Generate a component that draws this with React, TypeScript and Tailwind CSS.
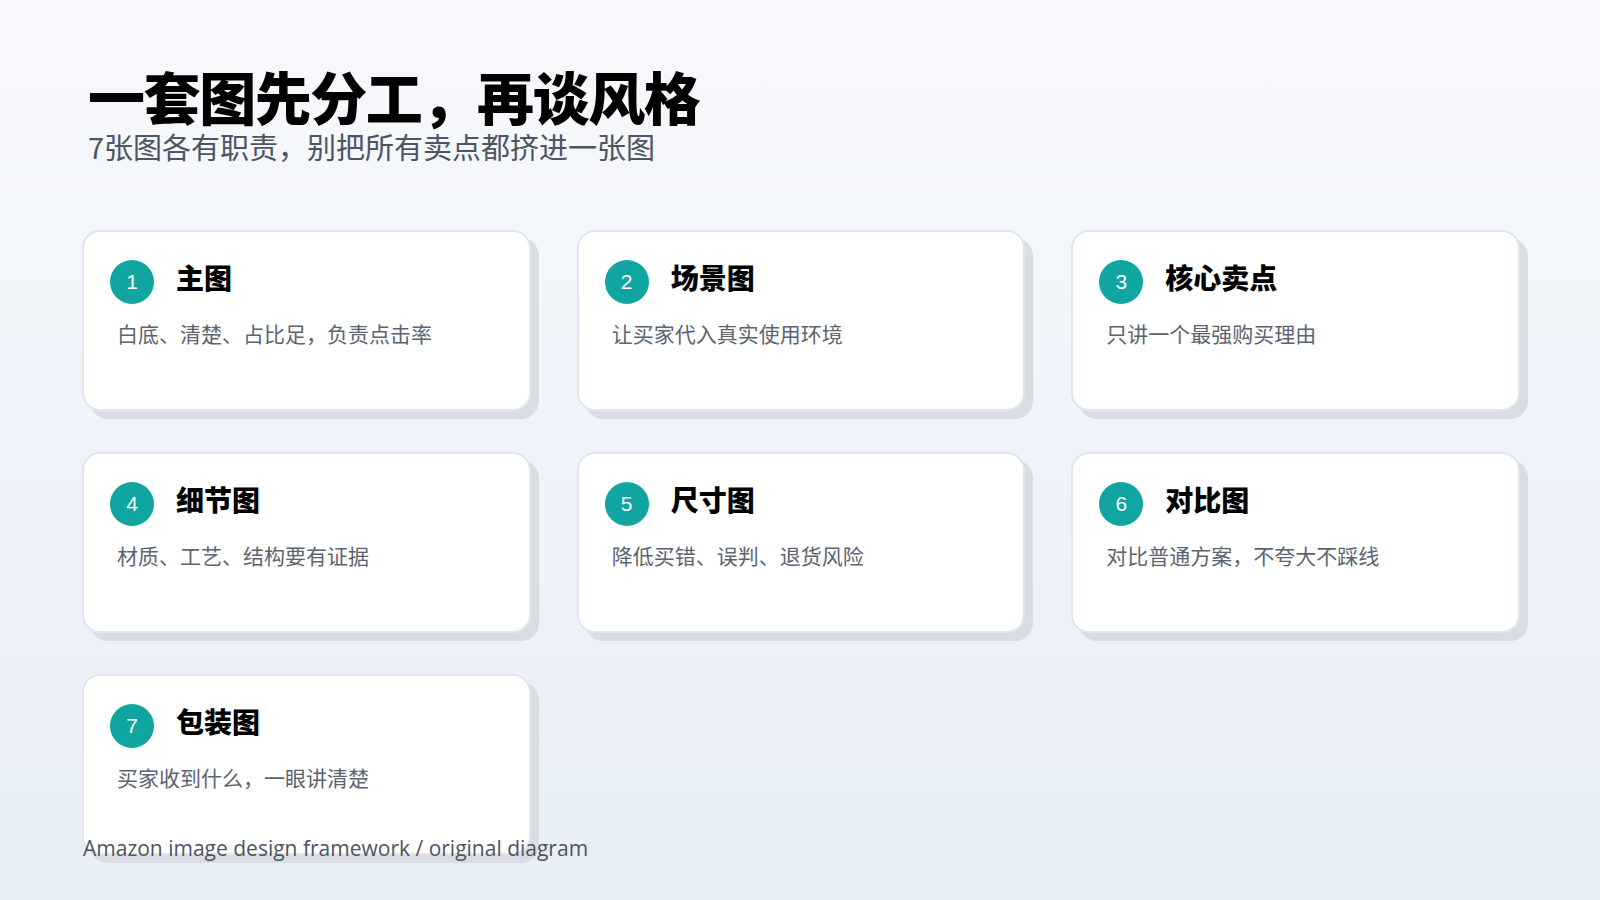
export default function App() {
  const items = [
    ["主图", "白底、清楚、占比足，负责点击率"],
    ["场景图", "让买家代入真实使用环境"],
    ["核心卖点", "只讲一个最强购买理由"],
    ["细节图", "材质、工艺、结构要有证据"],
    ["尺寸图", "降低买错、误判、退货风险"],
    ["对比图", "对比普通方案，不夸大不踩线"],
    ["包装图", "买家收到什么，一眼讲清楚"],
  ];
  const font = { fontFamily: '"Noto Sans CJK SC", "Noto Sans", sans-serif' };
  return (
    <div className="relative w-[1600px] h-[900px] overflow-hidden bg-gradient-to-b from-[#f7f9fc] to-[#e8eef7]" style={font}>
      <div className="pl-[88px] pt-[60px]">
        <h1 className="text-[57px] font-black leading-[70px] text-black tracking-tight">一套图先分工，再谈风格</h1>
        <p className="text-[29px] leading-[36px] text-[#4b5563] -mt-[2px]">7张图各有职责，别把所有卖点都挤进一张图</p>
      </div>
      <div className="grid grid-cols-3 gap-x-[46px] gap-y-[41px] pl-[82px] pr-[80px] mt-[66px]">
        {items.map(([t, d], i) => (
          <div key={i} className="h-[181px] rounded-[18px] bg-white border-2 border-[#e1e6ee] shadow-[8px_8px_0_#d9dde3] pl-[26px] pt-[28px]">
            <div className="flex items-center gap-[22px]">
              <div className="w-[44px] h-[44px] rounded-full bg-[#10a5a0] text-white text-[21px] flex items-center justify-center" style={{ fontFamily: '"Liberation Sans", sans-serif' }}>{i + 1}</div>
              <div className="text-[28px] font-black text-black -mt-[10px]">{t}</div>
            </div>
            <div className="mt-[14px] ml-[7px] text-[21px] text-[#5b6472]">{d}</div>
          </div>
        ))}
      </div>
      <div className="absolute left-[83px] top-[833px] text-[21px] text-[#4b5563]" style={{ fontFamily: '"Open Sans", sans-serif' }}>Amazon image design framework / original diagram</div>
    </div>
  );
}
